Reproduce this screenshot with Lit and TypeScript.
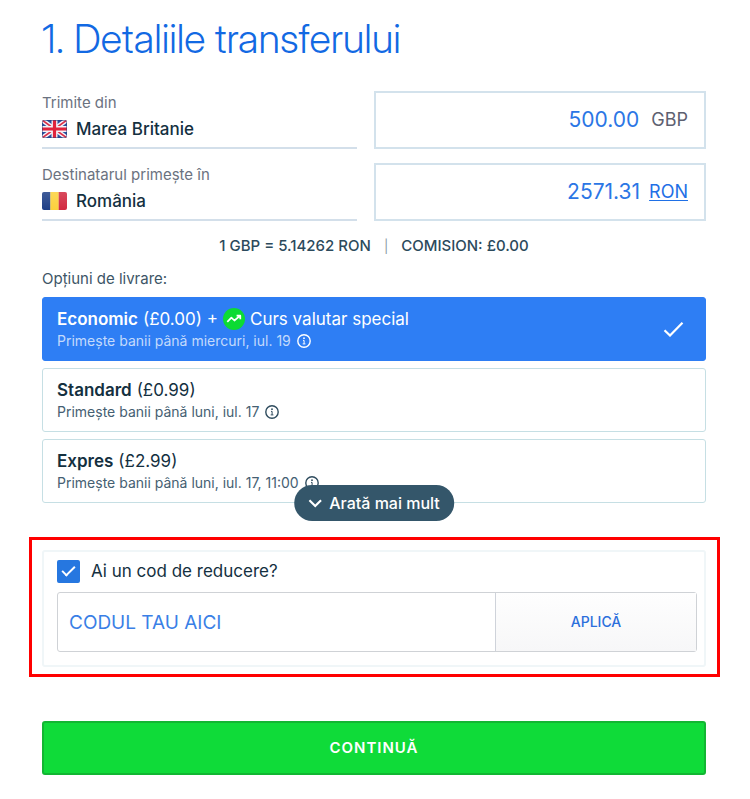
import { LitElement, html, css, svg, nothing } from "lit";
import { customElement, state } from "lit/decorators.js";
import { classMap } from "lit/directives/class-map.js";

interface DeliveryOption {
  id: string;
  name: string;
  fee: string;
  eta: string;
  special?: string;
}

const OPTIONS: DeliveryOption[] = [
  { id: "economic", name: "Economic", fee: "(£0.00)", eta: "Primește banii până miercuri, iul. 19", special: "Curs valutar special" },
  { id: "standard", name: "Standard", fee: "(£0.99)", eta: "Primește banii până luni, iul. 17" },
  { id: "expres", name: "Expres", fee: "(£2.99)", eta: "Primește banii până luni, iul. 17, 11:00" },
];

const ukFlag = html`<svg class="flag" viewBox="0 0 25 18" aria-hidden="true">
  <defs><clipPath id="uk"><rect width="25" height="18" rx="2" /></clipPath></defs>
  <g clip-path="url(#uk)">
    <rect width="25" height="18" fill="#2a4f9c" />
    <path d="M0 0 25 18M25 0 0 18" stroke="#f3f1f7" stroke-width="4.6" />
    <path d="M0 0 25 18M25 0 0 18" stroke="#dc3048" stroke-width="1.7" />
    <path d="M12.500 0V18M0 9H25" stroke="#f3f1f7" stroke-width="6" />
    <path d="M12.500 0V18M0 9H25" stroke="#e0233c" stroke-width="3.200" />
  </g>
  <rect x=".5" y=".5" width="24" height="17" rx="1.500" fill="none" stroke="#273b78" stroke-opacity=".5" />
</svg>`;

const roFlag = html`<svg class="flag" viewBox="0 0 25 18" aria-hidden="true">
  <defs>
    <clipPath id="ro"><rect width="25" height="18" rx="2" /></clipPath>
    <linearGradient id="shade" x2="0" y2="1">
      <stop stop-color="#fff" stop-opacity=".15" /><stop offset="1" stop-color="#fff" stop-opacity="0" />
    </linearGradient>
  </defs>
  <g clip-path="url(#ro)">
    <rect width="8.500" height="18" fill="#1e3f86" />
    <rect x="8.400" width="8.400" height="18" fill="#fcd13c" />
    <rect x="16.700" width="8.300" height="18" fill="#d22a40" />
    <rect width="25" height="18" fill="url(#shade)" />
  </g>
</svg>`;

const infoIcon = html`<svg class="info-icon" viewBox="0 0 14 14" aria-hidden="true">
  <circle cx="7" cy="7" r="6.200" fill="none" stroke="currentColor" stroke-width="1.400" />
  <circle cx="7" cy="4.200" r=".9" fill="currentColor" />
  <path d="M6 6.400H7.100V9.800M5.700 9.900H8.400" fill="none" stroke="currentColor" stroke-width="1" />
</svg>`;

const rateIcon = html`<svg class="rate-icon" viewBox="0 0 22 22" aria-hidden="true">
  <circle cx="11" cy="11" r="11" fill="#0cdb33" />
  <path d="M4.300 13.900 8.400 9.700 11.400 12.500 16.600 8.200M13.600 7.700H17.300V11.200" fill="none" stroke="#fff" stroke-width="1.700" stroke-linejoin="round" />
</svg>`;

const tick = svg`<path d="M1.500 9.200 7 14.500 19.500 1.800" fill="none" stroke="#fff" stroke-width="2.200" />`;

@customElement("app-root")
export class AppRoot extends LitElement {
  @state() private selected = "economic";
  @state() private hasCode = true;

  static styles = css`
    :host {
      display: block;
      box-sizing: border-box;
      padding: 15px 44px 24px 42px;
      background: #fff;
      color: #14303f;
      font-family: Inter, "Liberation Sans", sans-serif;
      font-size: 17px;
      line-height: 24px;
    }
    *, *::before { box-sizing: border-box; }
    button, input { font: inherit; color: inherit; margin: 0; }
    button { border: 0; padding: 0; background: none; cursor: pointer; }
    svg { display: block; flex: none; }
    .title {
      margin: 0 0 28px;
      font-family: "Inter Display", Roboto, Inter, sans-serif;
      font-size: 40px;
      font-weight: 300;
      line-height: 48px;
      color: #1269e3;
    }
    .amounts {
      display: grid;
      grid-template-columns: minmax(0, 315fr) minmax(0, 332fr);
      gap: 14px 17px;
    }
    .country {
      height: 58px;
      border-bottom: 2px solid #d3dfea;
    }
    .caption { font-size: 15px; line-height: 24px; color: #6b7280; }
    .pick {
      display: flex;
      align-items: center;
      gap: 9px;
      width: 100%;
      height: 28px;
      font-weight: 500;
      text-align: left;
    }
    .flag { width: 25px; height: 18px; }
    .amount {
      display: flex;
      align-items: center;
      gap: 12px;
      height: 58px;
      padding: 0 16px;
      border: 2px solid #d3e2ec;
    }
    .amount-input {
      flex: 1;
      min-width: 0;
      padding: 0;
      border: 0;
      outline: 0;
      background: none;
      font-size: 21px;
      text-align: right;
      color: #2b76e5;
    }
    .amount.tight { gap: 9px; }
    .currency { font-size: 18px; color: #5d6070; }
    a.currency { color: #1f70e6; text-underline-offset: 2px; }
    .rate {
      display: flex;
      justify-content: center;
      gap: 13px;
      margin-top: 13px;
      font-size: 15px;
      font-weight: 500;
      color: #2c4a5c;
    }
    .bar { font-size: 13px; font-weight: 400; color: #8a98a4; }
    .delivery {
      position: relative;
      margin: 0;
      padding: 0;
      border: 0;
      min-width: 0;
    }
    .legend {
      padding: 0;
      margin-top: 9px;
      height: 30px;
      font-size: 15px;
      color: #3d5566;
    }
    .options { display: grid; gap: 7px; }
    .option {
      display: flex;
      align-items: center;
      justify-content: space-between;
      height: 64px;
      padding: 0 21px 0 14px;
      border: 1px solid #c6dfe4;
      border-radius: 3px;
      cursor: pointer;
    }
    .option.on { background: #2e7ef4; border-color: #2e7ef4; color: #fff; }
    .radio { position: absolute; opacity: 0; pointer-events: none; }
    .line { display: flex; align-items: center; gap: 5px; height: 24px; }
    .name { font-weight: 600; }
    .eta {
      display: flex;
      align-items: center;
      gap: 6px;
      height: 20px;
      font-size: 14px;
      color: #456072;
    }
    .info { color: #2f4c5e; }
    .on .eta { color: #c3dafc; }
    .on .info { color: #fff; }
    .info-icon { width: 14px; height: 14px; }
    .rate-icon { width: 22px; height: 22px; }
    .check { width: 21px; height: 16px; }
    .more {
      position: absolute;
      left: 50%;
      bottom: -18px;
      transform: translateX(-50%);
      display: flex;
      align-items: center;
      gap: 7px;
      height: 36px;
      padding: 0 14px;
      border-radius: 18px;
      background: #34566a;
      color: #fff;
      font-size: 16px;
      font-weight: 500;
      white-space: nowrap;
    }
    .chevron { width: 14px; height: 9px; }
    .promo {
      margin: 34px -14px 0 -13px;
      padding: 10px 11px 7px 10px;
      border: 3px solid #f00;
    }
    .promo-card {
      padding: 7px 7px 13px 13px;
      border: 2px solid #f0f6f8;
      border-radius: 3px;
    }
    .code-toggle {
      display: flex;
      align-items: center;
      gap: 11px;
      height: 24px;
      cursor: pointer;
    }
    .box {
      appearance: none;
      display: grid;
      place-items: center;
      width: 23px;
      height: 23px;
      border: 2px solid #2677e0;
      border-radius: 2px;
      cursor: pointer;
    }
    .box:checked { background: #2677e0; }
    .box:checked::before {
      content: "";
      width: 13px;
      height: 7px;
      margin-bottom: 4px;
      border: solid #fff;
      border-width: 0 0 2px 2px;
      transform: rotate(-45deg);
    }
    .code-row {
      display: flex;
      height: 60px;
      margin-top: 9px;
      border: 1px solid #cfd2d6;
      border-radius: 3px;
    }
    .code-input {
      flex: 413;
      min-width: 0;
      padding: 2px 11px 0;
      border: 0;
      outline: 0;
      background: none;
      font-size: 19px;
      font-weight: 400;
      color: #3a7fe6;
    }
    .code-input::placeholder { color: #3a7fe6; opacity: 1; }
    .apply {
      flex: 199;
      border-left: 1px solid #cfd3da;
      background: linear-gradient(#fefefe, #f7f7f8);
      font-size: 14px;
      font-weight: 500;
      color: #2b6fdc;
    }
    .continue {
      width: 100%;
      height: 54px;
      margin-top: 44px;
      border: 2px solid #12b632;
      border-radius: 3px;
      background: #0fdb39;
      color: #fff;
      font-size: 15px;
      font-weight: 600;
      letter-spacing: 1px;
    }
  `;

  private renderOption(o: DeliveryOption) {
    const on = this.selected === o.id;
    return html`
      <label class=${classMap({ option: true, on })}>
        <input class="radio" type="radio" name="delivery" .checked=${on} @change=${() => (this.selected = o.id)} />
        <span>
          <span class="line">
            <span class="name">${o.name}</span>
            <span>${o.fee}${o.special ? " +" : nothing}</span>
            ${o.special ? html`${rateIcon}<span>${o.special}</span>` : nothing}
          </span>
          <span class="eta">${o.eta}<button class="info" type="button" aria-label="Informații">${infoIcon}</button></span>
        </span>
        ${on ? html`<svg class="check" viewBox="0 0 21 16" aria-hidden="true">${tick}</svg>` : nothing}
      </label>
    `;
  }

  render() {
    return html`
      <h1 class="title">1. Detaliile transferului</h1>
      <section class="amounts">
        <div class="country">
          <div class="caption" id="from">Trimite din</div>
          <button class="pick" type="button" aria-describedby="from">${ukFlag}Marea Britanie</button>
        </div>
        <div class="amount">
          <input class="amount-input" aria-label="Suma trimisă" value="500.00" />
          <span class="currency">GBP</span>
        </div>
        <div class="country">
          <div class="caption" id="to">Destinatarul primește în</div>
          <button class="pick" type="button" aria-describedby="to">${roFlag}România</button>
        </div>
        <div class="amount tight">
          <input class="amount-input" aria-label="Suma primită" value="2571.31" />
          <a class="currency" href="#ron">RON</a>
        </div>
      </section>
      <div class="rate">
        <span>1 GBP = 5.14262 RON</span><span class="bar">|</span><span>COMISION: £0.00</span>
      </div>
      <section class="delivery" role="radiogroup" aria-labelledby="delivery-label">
        <div class="legend" id="delivery-label">Opțiuni de livrare:</div>
        <div class="options">${OPTIONS.map((o) => this.renderOption(o))}</div>
        <button class="more" type="button">
          <svg class="chevron" viewBox="0 0 14 9" aria-hidden="true">
            <path d="M1.200 1.200 7 7 12.800 1.200" fill="none" stroke="#fff" stroke-width="2.200" />
          </svg>
          Arată mai mult
        </button>
      </section>
      <section class="promo">
        <div class="promo-card">
          <label class="code-toggle">
            <input class="box" type="checkbox" .checked=${this.hasCode}
              @change=${(e: Event) => (this.hasCode = (e.target as HTMLInputElement).checked)} />
            Ai un cod de reducere?
          </label>
          ${this.hasCode
            ? html`<div class="code-row">
                <input class="code-input" aria-label="Cod de reducere" placeholder="CODUL TAU AICI" />
                <button class="apply" type="button">APLICĂ</button>
              </div>`
            : nothing}
        </div>
      </section>
      <button class="continue" type="submit">CONTINUĂ</button>
    `;
  }
}
